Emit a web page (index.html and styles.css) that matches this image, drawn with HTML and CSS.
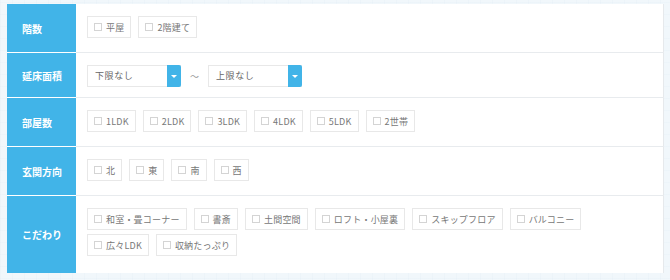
FILE: index.html
```html
<!DOCTYPE html>
<html lang="ja">
<head>
  <meta charset="UTF-8">
  <title>検索条件</title>
  <link rel="stylesheet" href="styles.css">
</head>
<body>
  <table class="joken">
    <tr>
      <th>階数</th>
      <td>
        <div class="chips">
          <label class="chip"><span class="box"></span>平屋</label>
          <label class="chip"><span class="box"></span>2階建て</label>
        </div>
      </td>
    </tr>
    <tr>
      <th>延床面積</th>
      <td class="menseki">
        <div class="linha">
          <div class="sel"><span class="val">下限なし</span><span class="btn"></span></div>
          <span class="kara">～</span>
          <div class="sel"><span class="val">上限なし</span><span class="btn"></span></div>
        </div>
      </td>
    </tr>
    <tr>
      <th>部屋数</th>
      <td>
        <div class="chips">
          <label class="chip"><span class="box"></span>1LDK</label>
          <label class="chip"><span class="box"></span>2LDK</label>
          <label class="chip"><span class="box"></span>3LDK</label>
          <label class="chip"><span class="box"></span>4LDK</label>
          <label class="chip"><span class="box"></span>5LDK</label>
          <label class="chip"><span class="box"></span>2世帯</label>
        </div>
      </td>
    </tr>
    <tr>
      <th>玄関方向</th>
      <td>
        <div class="chips">
          <label class="chip"><span class="box"></span>北</label>
          <label class="chip"><span class="box"></span>東</label>
          <label class="chip"><span class="box"></span>南</label>
          <label class="chip"><span class="box"></span>西</label>
        </div>
      </td>
    </tr>
    <tr>
      <th>こだわり</th>
      <td>
        <div class="chips">
          <label class="chip"><span class="box"></span>和室・畳コーナー</label>
          <label class="chip"><span class="box"></span>書斎</label>
          <label class="chip"><span class="box"></span>土間空間</label>
          <label class="chip"><span class="box"></span>ロフト・小屋裏</label>
          <label class="chip"><span class="box"></span>スキップフロア</label>
          <label class="chip"><span class="box"></span>バルコニー</label>
          <label class="chip"><span class="box"></span>広々LDK</label>
          <label class="chip"><span class="box"></span>収納たっぷり</label>
        </div>
      </td>
    </tr>
  </table>
</body>
</html>
```
FILE: styles.css
```css
body {
  margin: 0;
  padding: 4px 6px 6px 7px;
  font-family: "Noto Sans CJK JP", "Noto Sans", sans-serif;
  background-color: #f1f7fb;
  background-image:
    repeating-linear-gradient(90deg, rgba(205, 225, 240, 0.12) 0 1px, transparent 1px 12px),
    repeating-linear-gradient(0deg, rgba(205, 225, 240, 0.12) 0 1px, transparent 1px 12px);
}

.joken {
  width: 657px;
  border-collapse: collapse;
  background: #fff;
  border-right: 1px solid #e6e9ec;
}

.joken th {
  width: 54px;
  padding: 0 0 0 15px;
  background: #41b4e8;
  color: #fff;
  font-size: 10px;
  font-weight: bold;
  text-align: left;
  vertical-align: middle;
  border-bottom: 1px solid #fff;
}

.joken td {
  padding: 12px 30px 14px 11px;
  border-bottom: 1px solid #e8ebee;
}

.joken tr:last-child th,
.joken tr:last-child td {
  border-bottom: none;
}

.joken tr:last-child td {
  padding-bottom: 17px;
}

.joken .menseki {
  padding-bottom: 10px;
}

.chips {
  display: flex;
  flex-wrap: wrap;
  gap: 4px 7px;
}

.chip {
  display: flex;
  align-items: center;
  height: 22px;
  padding: 0 6px;
  border: 1px solid #e8e8e8;
  box-sizing: border-box;
  color: #777;
  font-size: 9px;
  letter-spacing: 0.2px;
  white-space: nowrap;
}

.box {
  width: 6px;
  height: 6px;
  border: 1px solid #d4d4d4;
  margin-right: 4px;
}

.linha {
  display: flex;
  align-items: center;
}

.sel {
  display: flex;
  width: 94px;
  height: 22px;
  border: 1px solid #e8e8e8;
  box-sizing: border-box;
}

.sel .val {
  flex: 1;
  padding-left: 7px;
  line-height: 20px;
  font-size: 9px;
  letter-spacing: 0.6px;
  color: #666;
}

.sel .btn {
  width: 14px;
  margin: -1px -1px -1px 0;
  background: #41b4e8;
  border-radius: 0 2px 2px 0;
  position: relative;
}

.sel .btn::after {
  content: "";
  position: absolute;
  left: 4px;
  top: 10px;
  border-left: 3px solid transparent;
  border-right: 3px solid transparent;
  border-top: 3px solid #fff;
}

.kara {
  margin: 0 9px 0 9px;
  color: #999;
  font-size: 9px;
}
```
